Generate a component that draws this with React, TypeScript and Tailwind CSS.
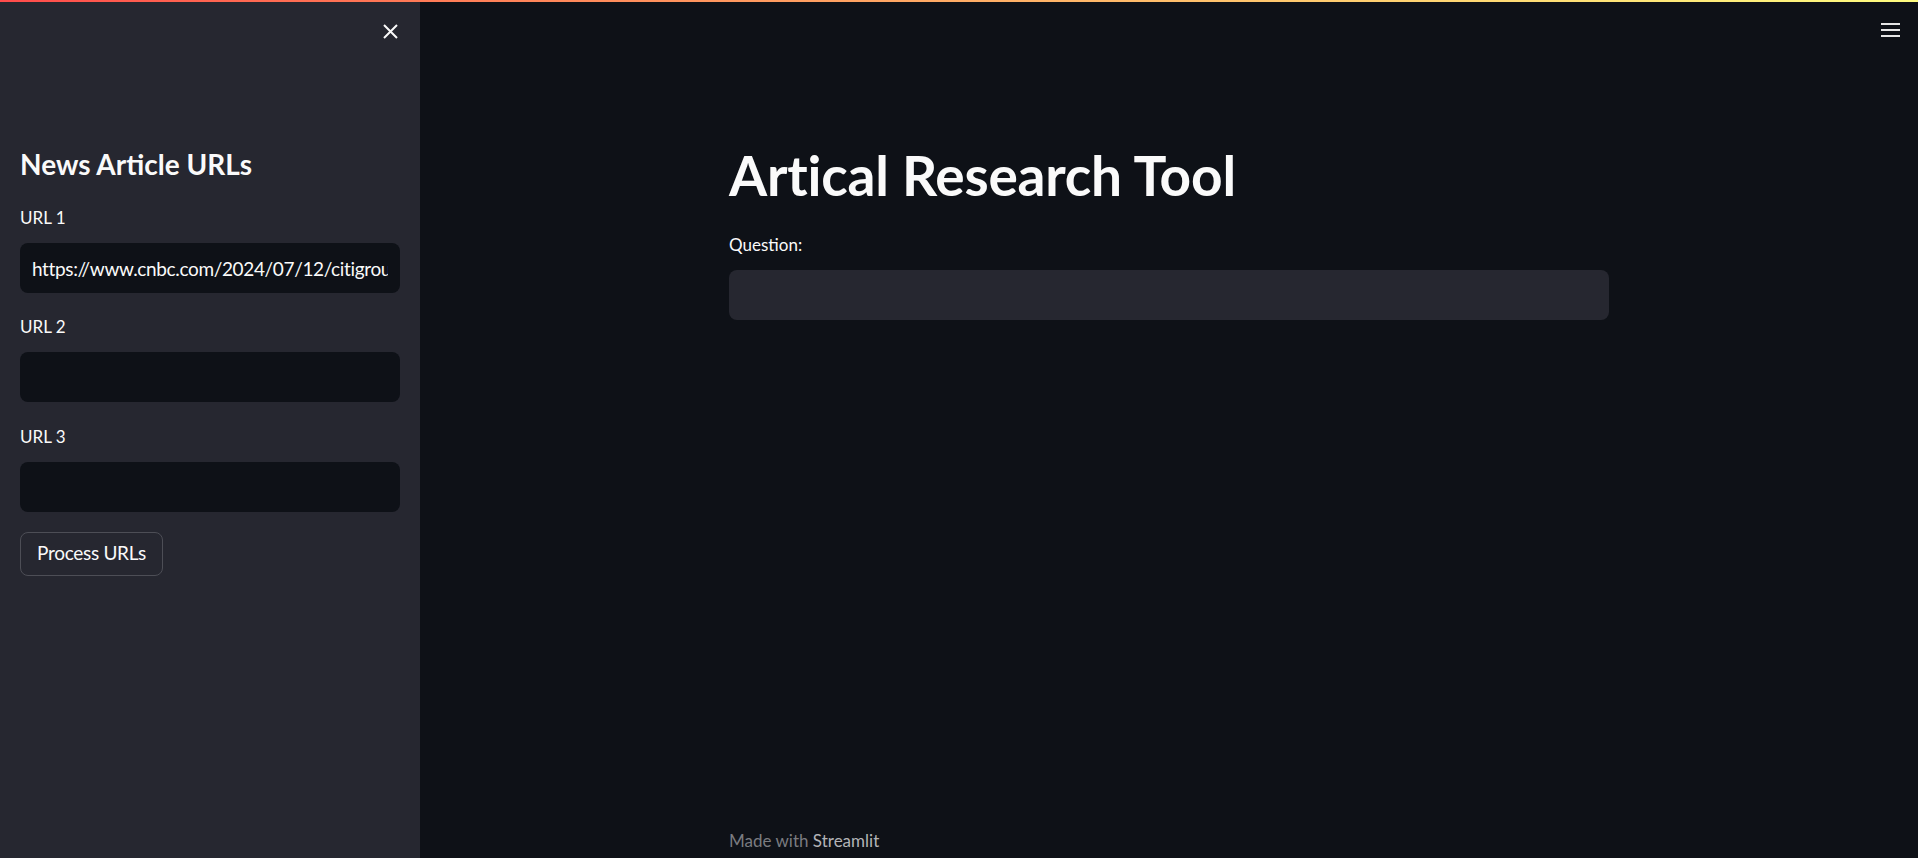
function Field({ label, value, className }: { label: string; value?: string; className?: string }) {
    return (
        <div className={className}>
            <label className="block text-[17px] leading-none text-[#fafafa]">{label}</label>
            <input
                className="mt-[17px] block h-[50px] w-full rounded-[8px] bg-[#0e1117] px-[12px] text-[19px] tracking-[-0.35px] text-[#fafafa] outline-none"
                defaultValue={value}
                readOnly
            />
        </div>
    )
}

function Sidebar() {
    return (
        <aside className="flex w-[420px] shrink-0 flex-col bg-[#262730] px-[20px]">
            {/* close */}
            <div className="flex justify-end pt-[24px] pr-[2px]">
                <svg width="15" height="15" viewBox="0 0 15 15" className="text-[#fafafa]">
                    <path d="M1 1L14 14M14 1L1 14" stroke="currentColor" strokeWidth="2" />
                </svg>
            </div>

            <h2 className="mt-[111px] text-[28px] font-bold leading-none text-[#fafafa]">News Article URLs</h2>

            <Field className="mt-[31px]" label="URL 1" value="https://www.cnbc.com/2024/07/12/citigroup-earnings-q2-2024.html" />
            <Field className="mt-[25px]" label="URL 2" />
            <Field className="mt-[26px]" label="URL 3" />

            <div className="mt-[20px]">
                <button className="h-[44px] w-[143px] rounded-[8px] border border-[#4d4e56] bg-[#262730] pb-[2px] text-[19px] tracking-[-0.3px] text-[#fafafa]">
                    Process URLs
                </button>
            </div>
        </aside>
    )
}

function Main() {
    return (
        <main className="relative flex flex-1 flex-col bg-[#0e1117]">
            {/* menu */}
            <div className="absolute right-[18px] top-[23px] flex w-[19px] flex-col gap-[4px]">
                <span className="h-[2px] bg-[#e6e6e6]" />
                <span className="h-[2px] bg-[#e6e6e6]" />
                <span className="h-[2px] bg-[#e6e6e6]" />
            </div>

            <div className="mx-auto flex w-[880px] flex-1 flex-col">
                <h1 className="mt-[148px] text-[55px] font-bold leading-none tracking-[-0.2px] text-[#fafafa]">Artical Research Tool</h1>

                <label className="mt-[33px] block text-[17px] leading-none text-[#fafafa]">Question:</label>
                <input className="mt-[17px] block h-[50px] w-full rounded-[8px] bg-[#262730] px-[12px] text-[20px] text-[#fafafa] outline-none" readOnly />

                <div className="mt-auto pb-[9px] text-[17px] leading-none text-[#7b7c80]">
                    Made with <span className="text-[#b3b4b7]">Streamlit</span>
                </div>
            </div>
        </main>
    )
}

export default function App() {
    return (
        <div className="relative flex h-[858px] w-full overflow-hidden font-['Lato',sans-serif]">
            <div className="absolute inset-x-0 top-0 z-10 h-[2px] bg-gradient-to-r from-[#ff4b4b] to-[#fffd80]" />
            <Sidebar />
            <Main />
        </div>
    )
}
